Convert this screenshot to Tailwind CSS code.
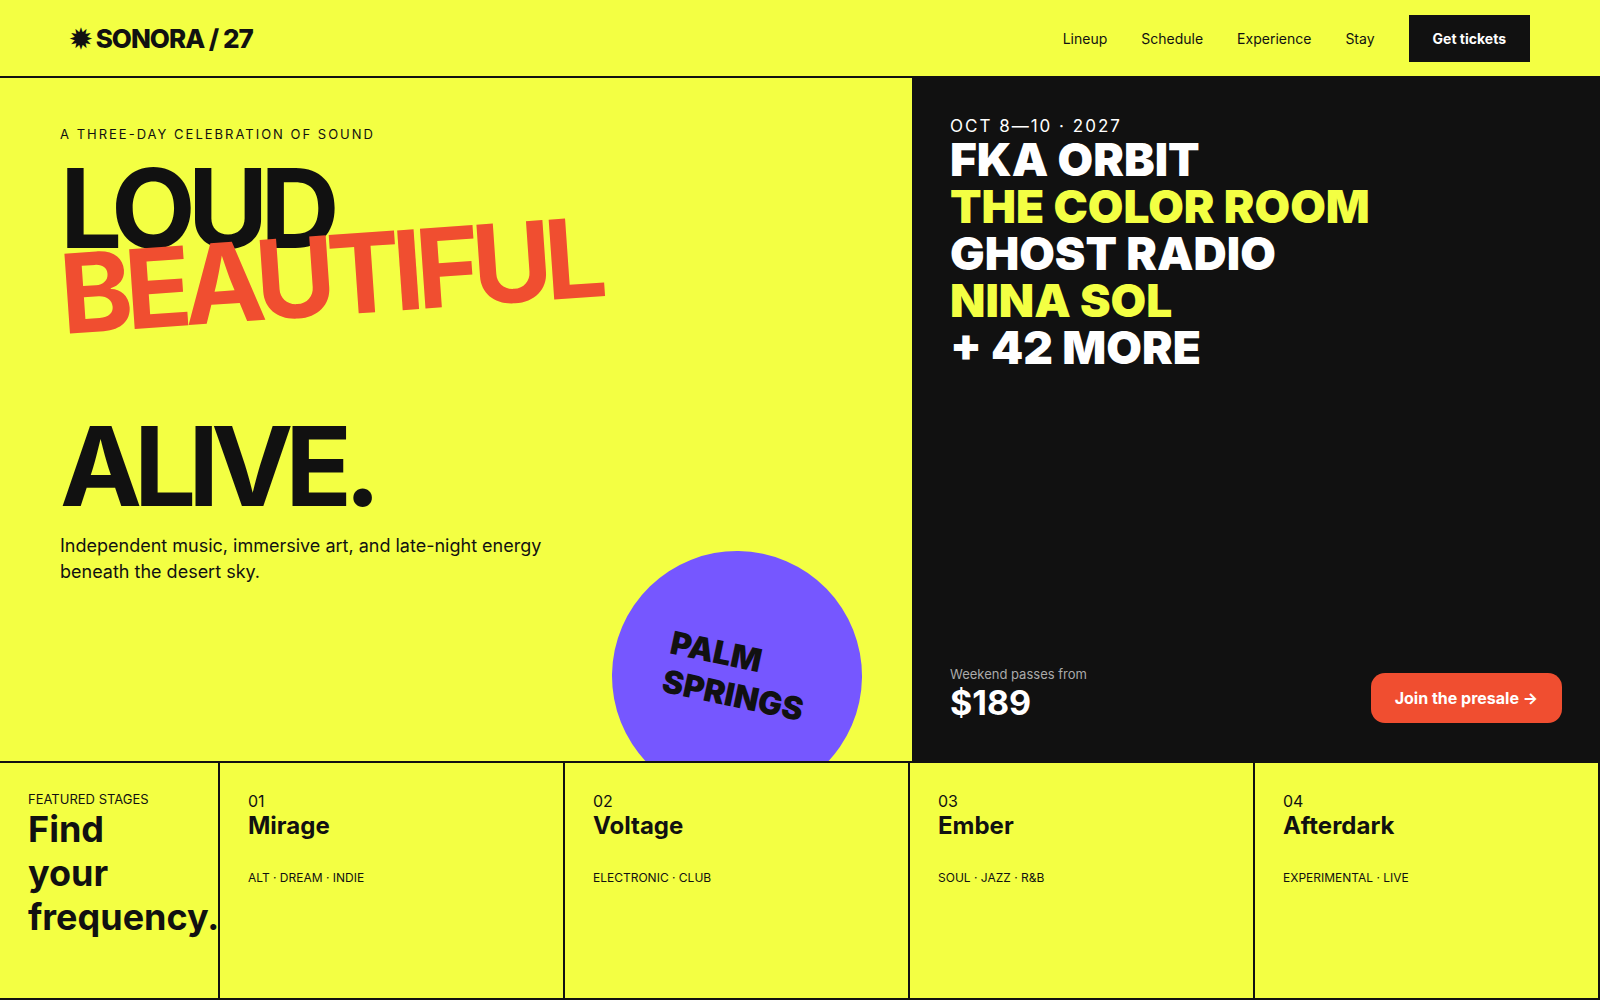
<!DOCTYPE html>
<html lang="en">
<head>
  <meta charset="UTF-8">
  <meta name="viewport" content="width=device-width, initial-scale=1.0">
  <title>Sonora / 27</title>
  <script src="https://cdn.jsdelivr.net/npm/@tailwindcss/browser@4"></script>
</head>
<body class="min-h-screen flex flex-col bg-[#f3ff43] text-[#111111] font-[Inter,sans-serif]">
  <header class="h-[78px] px-[70px] flex items-center justify-between border-b-2 border-[#111111]">
    <a href="#" class="text-[26px] font-extrabold tracking-[-1px]">✹ SONORA / 27</a>
    <nav class="flex items-center gap-[34px] text-sm leading-[17px]">
      <a href="#lineup">Lineup</a>
      <a href="#stages">Schedule</a>
      <a href="#experience">Experience</a>
      <a href="#stay">Stay</a>
      <button type="button" class="bg-[#111111] text-white font-bold px-6 py-[15px]">Get tickets</button>
    </nav>
  </header>

  <main class="flex-1 flex flex-col">
    <!-- Hero -->
    <section class="flex-1 grid grid-cols-[57fr_43fr] border-b-2 border-[#111111]">
      <div class="relative overflow-hidden px-[60px] py-12">
        <p class="text-[13px] leading-4 tracking-[2px]">A THREE-DAY CELEBRATION OF SOUND</p>
        <h1 class="mt-[23px] text-[110px] leading-[86px] font-bold tracking-[-8px]">
          LOUD<br>
          <span class="block origin-left -rotate-4 text-[#f04e30]">BEAUTIFUL</span><br>
          ALIVE.
        </h1>
        <p class="mt-6 max-w-[500px] text-lg leading-[26px]">Independent music, immersive art, and late-night energy beneath the desert sky.</p>
        <div class="absolute right-[50px] -bottom-10 size-[250px] rounded-full bg-[#7657ff] grid place-items-center rotate-12">
          <p class="text-[32px] leading-[39px] font-black">PALM<br>SPRINGS</p>
        </div>
      </div>

      <div id="lineup" class="bg-[#111111] text-white p-[38px] flex flex-col justify-between">
        <div>
          <p class="text-[17px] leading-5 tracking-[2px]">OCT 8—10 · 2027</p>
          <ul class="text-[46px] leading-[47px] font-black">
            <li>FKA ORBIT</li>
            <li class="text-[#f3ff43]">THE COLOR ROOM</li>
            <li>GHOST RADIO</li>
            <li class="text-[#f3ff43]">NINA SOL</li>
            <li>+ 42 MORE</li>
          </ul>
        </div>
        <div class="flex items-end justify-between">
          <div>
            <p class="text-[13px] leading-4 text-[#aaaaaa]">Weekend passes from</p>
            <p class="text-[34px] leading-[41px] font-bold">$189</p>
          </div>
          <button type="button" class="bg-[#f04e30] text-white font-bold rounded-[14px] px-6 h-[50px]">Join the presale →</button>
        </div>
      </div>
    </section>

    <!-- Stages -->
    <section id="stages" class="min-h-[237px] grid grid-cols-[220px_repeat(4,1fr)] border-b-2 border-[#111111]">
      <div class="p-7 border-r-2 border-[#111111]">
        <p class="text-[13px] leading-4">FEATURED STAGES</p>
        <h2 class="text-4xl leading-[44px] font-bold">Find your frequency.</h2>
      </div>
      <article class="p-7 border-r-2 border-[#111111]">
        <p class="leading-5">01</p>
        <h3 class="text-2xl leading-[29px] font-bold">Mirage</h3>
        <p class="mt-[30px] text-xs">ALT · DREAM · INDIE</p>
      </article>
      <article class="p-7 border-r-2 border-[#111111]">
        <p class="leading-5">02</p>
        <h3 class="text-2xl leading-[29px] font-bold">Voltage</h3>
        <p class="mt-[30px] text-xs">ELECTRONIC · CLUB</p>
      </article>
      <article class="p-7 border-r-2 border-[#111111]">
        <p class="leading-5">03</p>
        <h3 class="text-2xl leading-[29px] font-bold">Ember</h3>
        <p class="mt-[30px] text-xs">SOUL · JAZZ · R&amp;B</p>
      </article>
      <article class="p-7 border-r-2 border-[#111111]">
        <p class="leading-5">04</p>
        <h3 class="text-2xl leading-[29px] font-bold">Afterdark</h3>
        <p class="mt-[30px] text-xs">EXPERIMENTAL · LIVE</p>
      </article>
    </section>
  </main>
</body>
</html>
